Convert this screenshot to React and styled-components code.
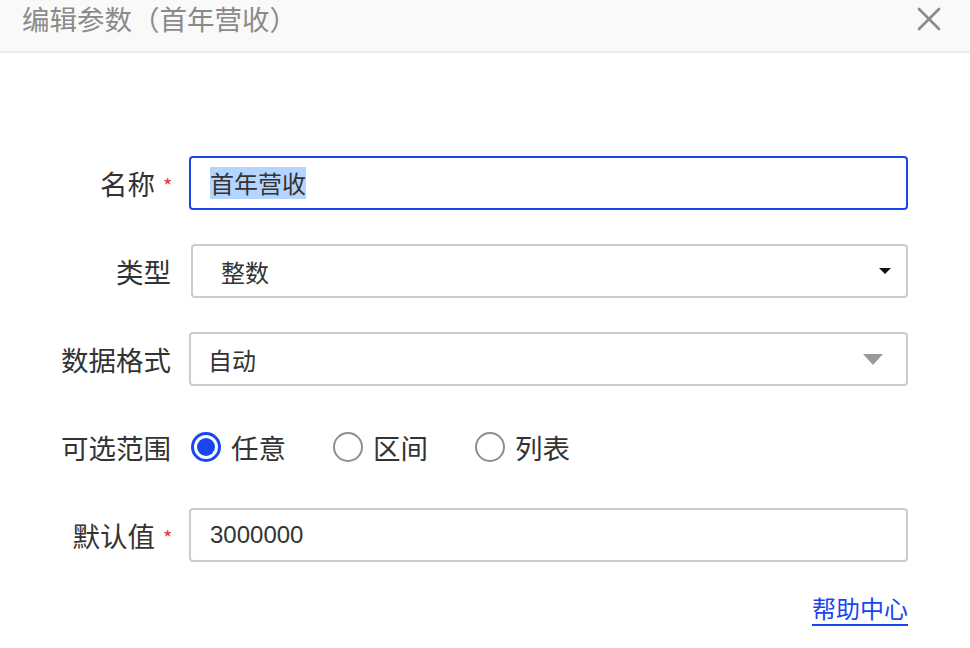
import React from 'react'
import styled, { createGlobalStyle } from 'styled-components'

const theme = {
  blue: '#1a46f0',
  text: '#333333',
  border: '#cccccc',
  muted: '#8a8a8a',
  red: '#e5383b',
}

const GlobalStyle = createGlobalStyle`
  html, body {
    margin: 0;
    padding: 0;
    background: #ffffff;
  }
  body {
    font-family: "Noto Sans CJK SC", "Noto Sans", "Liberation Sans", sans-serif;
    color: ${theme.text};
  }
`

const Dialog = styled.div`
  width: 970px;
  height: 648px;
  background: #fff;
  overflow: hidden;
`

const Header = styled.div`
  height: 51px;
  padding: 0 22px;
  display: flex;
  justify-content: space-between;
  align-items: flex-start;
  background: #f9f9f9;
  border-bottom: 2px solid #ececec;
`

const Title = styled.div`
  font-size: 27.5px;
  line-height: 36px;
  color: ${theme.muted};
`

const Close = styled.button`
  margin-top: 6px;
  margin-right: 6px;
  width: 26px;
  height: 26px;
  padding: 0;
  border: 0;
  background: none;
  display: flex;
  align-items: center;
  justify-content: center;
`

const Form = styled.div`
  padding: 103px 62px 0 0;
  display: flex;
  flex-direction: column;
  gap: 34px;
`

const Row = styled.div`
  display: flex;
  align-items: center;
  height: 54px;
`

const Label = styled.div`
  width: 171px;
  box-sizing: border-box;
  flex: none;
  display: flex;
  justify-content: flex-end;
  align-items: center;
  font-size: 27.5px;
  color: ${theme.text};
`

const Star = styled.span`
  color: ${theme.red};
  font-size: 20px;
  margin-left: 8px;
  margin-top: 4px;
  width: 8px;
`

const Field = styled.div`
  flex: 1;
  height: 54px;
  box-sizing: border-box;
  margin-left: ${props => (props.inset ? '20px' : '18px')};
  border: 2px solid ${props => (props.focused ? theme.blue : theme.border)};
  border-radius: 4px;
  display: flex;
  align-items: center;
  justify-content: space-between;
  padding: 0 ${props => props.padRight || 16}px 0 ${props => props.padLeft || 19}px;
  font-size: 24px;
  color: ${theme.text};
  background: #fff;
`

const Selected = styled.span`
  background: #b4d5fd;
  line-height: 32px;
`

const Number = styled.span`
  font-family: "Liberation Sans", Arial, sans-serif;
  font-size: 24px;
`

const Caret = styled.span`
  width: 0;
  height: 0;
  border-left: ${props => props.size}px solid transparent;
  border-right: ${props => props.size}px solid transparent;
  border-top: ${props => props.height}px solid ${props => props.color};
`

const Radios = styled.div`
  display: flex;
  align-items: center;
  margin-left: 20px;
  gap: 47px;
`

const RadioItem = styled.label`
  display: flex;
  align-items: center;
  gap: 10px;
  font-size: 27.5px;
  color: ${theme.text};
`

const RadioCircle = styled.span`
  width: 30px;
  height: 30px;
  box-sizing: border-box;
  border-radius: 50%;
  border: ${props => (props.checked ? `3px solid ${theme.blue}` : '2px solid #8e8e8e')};
  display: flex;
  align-items: center;
  justify-content: center;
  &::after {
    content: '';
    width: 18px;
    height: 18px;
    border-radius: 50%;
    background: ${theme.blue};
    display: ${props => (props.checked ? 'block' : 'none')};
  }
`

const Footer = styled.div`
  display: flex;
  justify-content: flex-end;
  margin-top: -4px;
`

const HelpLink = styled.a`
  font-size: 24px;
  color: ${theme.blue};
  text-decoration: none;
  border-bottom: 2px solid ${theme.blue};
  line-height: 32px;
`

const Radio = ({ checked, children }) => (
  <RadioItem>
    <RadioCircle checked={checked} />
    {children}
  </RadioItem>
)

const App = () => (
  <Dialog>
    <GlobalStyle />
    <Header>
      <Title>编辑参数（首年营收）</Title>
      <Close>
        <svg width="24" height="24" viewBox="0 0 24 24">
          <path d="M2 2 L22 22 M22 2 L2 22" stroke="#8a8a8a" strokeWidth="2.6" strokeLinecap="round" />
        </svg>
      </Close>
    </Header>
    <Form>
      <Row>
        <Label>名称<Star>*</Star></Label>
        <Field focused padLeft={19}>
          <Selected>首年营收</Selected>
        </Field>
      </Row>
      <Row>
        <Label>类型</Label>
        <Field inset padLeft={28} padRight={15}>
          <span>整数</span>
          <Caret size={6} height={6} color="#111" />
        </Field>
      </Row>
      <Row>
        <Label>数据格式</Label>
        <Field padLeft={17} padRight={23}>
          <span>自动</span>
          <Caret size={10} height={11} color="#9a9a9a" />
        </Field>
      </Row>
      <Row>
        <Label>可选范围</Label>
        <Radios>
          <Radio checked>任意</Radio>
          <Radio>区间</Radio>
          <Radio>列表</Radio>
        </Radios>
      </Row>
      <Row>
        <Label>默认值<Star>*</Star></Label>
        <Field padLeft={19}>
          <Number>3000000</Number>
        </Field>
      </Row>
      <Footer>
        <HelpLink href="#">帮助中心</HelpLink>
      </Footer>
    </Form>
  </Dialog>
)

export default App
